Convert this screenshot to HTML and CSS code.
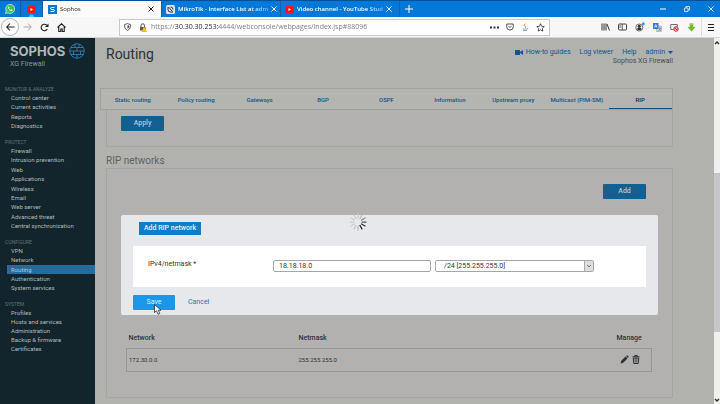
FILE: index.html
```html
<!DOCTYPE html>
<html lang="en">
<head>
<meta charset="utf-8">
<title>Sophos</title>
<link rel="stylesheet" href="styles.css">
</head>
<body>
<header class="browser">
  <div class="tabstrip">
    <button class="pin" aria-label="WhatsApp"><svg width="10" height="10" viewBox="0 0 20 20"><path d="M1 19l1.400-5A9 9 0 1 1 6 17.700z" fill="#2fc653" stroke="#dff5e3" stroke-width="1.500"/><path d="M6.500 5.500c-2 2.500 3.500 9.500 7 8.500 2-.8 1.600-2 1-2.300l-2-1-1.500 1.200C9.500 11.300 8.500 10 8.200 9l1-1.300-1-2.200z" fill="#fff"/></svg></button>
    <button class="pin pin-dot" aria-label="YouTube"><svg width="9" height="7" viewBox="0 0 18 14"><rect width="18" height="14" rx="4" fill="#f5141c"/><path d="M7 4l5 3-5 3z" fill="#fff"/></svg></button>
    <div class="tab tab-active"><svg width="9" height="9" viewBox="0 0 18 18"><rect width="18" height="18" fill="#0b77c9"/><path d="M13 5H8q-3 0-3 2t3 2h2q3 0 3 2t-3 2H5" fill="none" stroke="#fff" stroke-width="2"/></svg><span>Sophos</span><button aria-label="Close tab"><svg width="6" height="6" viewBox="0 0 6 6"><path d="M.5.5l5 5m0-5l-5 5" stroke="currentColor"/></svg></button></div>
    <div class="tab"><svg width="9" height="9" viewBox="0 0 18 18"><rect width="18" height="18" rx="3" fill="#dfe3e6"/><path d="M4 4v5q0 5 5 5h5M5 4l8 9M9 4q5 0 5 5" fill="none" stroke="#333" stroke-width="2"/></svg><span>MikroTik - Interface List at adm</span><button aria-label="Close tab"><svg width="6" height="6" viewBox="0 0 6 6"><path d="M.5.5l5 5m0-5l-5 5" stroke="currentColor"/></svg></button></div>
    <div class="tab"><svg width="9" height="7" viewBox="0 0 18 14"><rect width="18" height="14" rx="4" fill="#f5141c"/><path d="M7 4l5 3-5 3z" fill="#fff"/></svg><span>Video channel - YouTube Stud</span><button aria-label="Close tab"><svg width="6" height="6" viewBox="0 0 6 6"><path d="M.5.5l5 5m0-5l-5 5" stroke="currentColor"/></svg></button></div>
    <button class="newtab" aria-label="New tab"><svg width="8" height="8" viewBox="0 0 8 8"><path d="M4 0v8M0 4h8" stroke="#fff"/></svg></button>
    <div class="window-controls">
      <button aria-label="Minimize"><svg width="6" height="6" viewBox="0 0 6 6"><path d="M0 3h6" stroke="#fff"/></svg></button>
      <button aria-label="Restore"><svg width="6" height="6" viewBox="0 0 12 12"><path d="M1 4h7v7H1zM4 4V1h7v7H8" fill="none" stroke="#fff" stroke-width="1.500"/></svg></button>
      <button aria-label="Close"><svg width="6" height="6" viewBox="0 0 6 6"><path d="M.3.3l5.400 5.400m0-5.400L.3 5.700" stroke="#fff" stroke-width=".8"/></svg></button>
    </div>
  </div>
  <div class="toolbar">
    <button class="back" aria-label="Back"><svg width="9" height="8" viewBox="0 0 18 16"><path d="M17 8H2m6-7L1.500 8 8 15" fill="none" stroke="#222" stroke-width="2.200"/></svg></button>
    <button class="nav" aria-label="Forward"><svg width="9" height="8" viewBox="0 0 18 16"><path d="M1 8h15m-6-7l6.500 7-6.500 7" fill="none" stroke="#aaa" stroke-width="2"/></svg></button>
    <button class="nav" aria-label="Reload"><svg width="9" height="9" viewBox="0 0 18 18"><path d="M14.500 12A6.500 6.500 0 1 1 13.500 4.500" fill="none" stroke="#222" stroke-width="2.200"/><path d="M17 1v7h-7z" fill="#222"/></svg></button>
    <button class="nav" aria-label="Home"><svg width="9" height="9" viewBox="0 0 18 18"><path d="M1 9l8-7.500L17 9M3.500 8v9h4v-5h3v5h4V8" fill="none" stroke="#222" stroke-width="2.200"/></svg></button>
    <div class="urlbar">
      <svg width="7" height="8" viewBox="0 0 14 16"><path d="M1.500 2.500Q5 2.500 7 1q2 1.500 5.500 1.500V8q0 4-5.500 7-5.500-3-5.500-7z" fill="none" stroke="#444" stroke-width="1.800"/><path d="M7 4.500v7Q10 10 10 7.500V5z" fill="#444"/></svg>
      <svg class="lock" width="8" height="9" viewBox="0 0 16 18"><path d="M4 8V5a3.500 3.500 0 0 1 7 0v3" fill="none" stroke="#555" stroke-width="2"/><path d="M2 8h11v7H2z" fill="#555"/><path d="M10 7l6 11H4.500z" fill="#f9bd12"/></svg>
      <input class="url" type="text" aria-label="Address" value="https://30.30.30.253:4444/webconsole/webpages/index.jsp#88096">
      <svg width="9" height="3" viewBox="0 0 9 3"><path d="M0 1.500h2m1.500 0h2m1.500 0h2" stroke="#333" stroke-width="1.800"/></svg>
      <svg width="8" height="8" viewBox="0 0 16 16"><path d="M1.500 2h13v6a6.500 6 0 0 1-13 0zM5 6l3 3 3-3" fill="none" stroke="#444" stroke-width="1.800"/></svg>
      <svg width="8" height="9" viewBox="0 0 16 18"><path d="M9 1q-5 4-1 6t0 3" fill="none" stroke="#e99145" stroke-width="2"/><path d="M4 12h8M4 15h8M12 11q3-2 1 2" fill="none" stroke="#7ea3bd" stroke-width="1.800"/></svg>
      <svg width="9" height="9" viewBox="0 0 18 18"><path d="M9 1.500l2.300 5 5.200.6-3.800 3.700 1 5.400L9 13.600l-4.700 2.600 1-5.400L1.500 7.100l5.200-.6z" fill="none" stroke="#333" stroke-width="1.700"/></svg>
    </div>
    <div class="tools">
      <button aria-label="Library"><svg width="9" height="8" viewBox="0 0 18 16"><path d="M2 1v14M6 1v14M10 1v14M12 2l5 13" stroke="#333" stroke-width="2"/></svg></button>
      <button aria-label="Sidebars"><svg width="9" height="8" viewBox="0 0 18 16"><rect x="1" y="2" width="16" height="12" rx="2" fill="none" stroke="#333" stroke-width="1.800"/><path d="M8.500 2v12M3 5.500h3M3 8.500h3" stroke="#333" stroke-width="1.600"/></svg></button>
      <button aria-label="Account"><svg width="10" height="10" viewBox="0 0 20 20"><circle cx="8.500" cy="11" r="7" fill="#eee" stroke="#444" stroke-width="1.500"/><circle cx="8.500" cy="8.500" r="3" fill="#333"/><path d="M4 15q0-4 4.500-4t4.500 4q-4.500 3-9 0z" fill="#333"/><circle cx="16.500" cy="3.500" r="3" fill="#15a3f2"/></svg></button>
      <button aria-label="Translate"><svg width="9" height="9" viewBox="0 0 18 18"><rect x="7" y="6" width="10" height="11" fill="#d5d9df" stroke="#8792a2"/><rect width="11" height="12" fill="#3c78d8"/><path d="M3 9l2.500-6L8 9M4 7h3" fill="none" stroke="#fff" stroke-width="1.300"/><path d="M11 10h5m-1 0q-1 4-4 5m1-3q1 3 4 3" fill="none" stroke="#566" stroke-width="1.200"/></svg></button>
      <button aria-label="Blocked"><svg width="9" height="9" viewBox="0 0 18 18"><path d="M7 13H1.500V3h13v5" fill="none" stroke="#555" stroke-width="1.700"/><circle cx="12" cy="12" r="4.500" fill="#f4c2c2" stroke="#d32232" stroke-width="2"/><path d="M9 9l6 6" stroke="#d32232" stroke-width="2"/></svg></button>
      <button aria-label="Download"><svg width="9" height="9" viewBox="0 0 18 18"><path d="M5.500 1h7v7H17l-8 9-8-9h4.500z" fill="#6dbb1d"/><path d="M5.500 1h7v3h-7z" fill="#98d44e"/></svg></button>
    </div>
    <button class="menu" aria-label="Menu"><svg width="8" height="7" viewBox="0 0 8 7"><path d="M1 .5h6M1 3.500h6M1 6.500h6" stroke="#222"/></svg></button>
  </div>
</header>
<div class="app">
  <aside class="sidebar">
    <div class="brand">
      <div class="brand-name"><strong>SOPHOS</strong><svg width="16" height="16" viewBox="0 0 32 32"><g fill="none" stroke="#2b78a5" stroke-width="2"><circle cx="16" cy="16" r="14.500"/><path d="M4 9h24M2 16h28M4 23h24M16 9v7M9 16v7M23 16v7M12 2v7M20 2v7M16 23v7"/></g></svg></div>
      <div class="brand-sub">XG Firewall</div>
    </div>
    <nav class="menu-groups">
      <section><h2>MONITOR &amp; ANALYZE</h2><ul><li><a href="#">Control center</a></li><li><a href="#">Current activities</a></li><li><a href="#">Reports</a></li><li><a href="#">Diagnostics</a></li></ul></section>
      <section><h2>PROTECT</h2><ul><li><a href="#">Firewall</a></li><li><a href="#">Intrusion prevention</a></li><li><a href="#">Web</a></li><li><a href="#">Applications</a></li><li><a href="#">Wireless</a></li><li><a href="#">Email</a></li><li><a href="#">Web server</a></li><li><a href="#">Advanced threat</a></li><li><a href="#">Central synchronization</a></li></ul></section>
      <section><h2>CONFIGURE</h2><ul><li><a href="#">VPN</a></li><li><a href="#">Network</a></li><li><a class="current" href="#">Routing</a></li><li><a href="#">Authentication</a></li><li><a href="#">System services</a></li></ul></section>
      <section><h2>SYSTEM</h2><ul><li><a href="#">Profiles</a></li><li><a href="#">Hosts and services</a></li><li><a href="#">Administration</a></li><li><a href="#">Backup &amp; firmware</a></li><li><a href="#">Certificates</a></li></ul></section>
    </nav>
  </aside>
  <main class="main">
    <div class="page-head">
      <h1>Routing</h1>
      <div class="account">
        <div class="links"><a href="#"><svg width="8" height="5" viewBox="0 0 8 5"><path d="M0 0h5v5H0zM5 2l3-2v5L5 3z" fill="currentColor"/></svg>How-to guides</a><a href="#">Log viewer</a><a href="#">Help</a><a href="#">admin<svg width="5" height="3" viewBox="0 0 5 3"><path d="M0 0h5L2.500 3z" fill="currentColor"/></svg></a></div>
        <div class="product">Sophos XG Firewall</div>
      </div>
    </div>
    <nav class="subtabs"><a href="#">Static routing</a><a href="#">Policy routing</a><a href="#">Gateways</a><a href="#">BGP</a><a href="#">OSPF</a><a href="#">Information</a><a href="#">Upstream proxy</a><a href="#">Multicast (PIM-SM)</a><a class="selected" href="#">RIP</a></nav>
    <div class="panel panel-apply"><button class="btn">Apply</button></div>
    <h2 class="section-title">RIP networks</h2>
    <div class="panel panel-networks">
      <div class="actions"><button class="btn">Add</button></div>
      <table class="networks">
        <thead><tr><th>Network</th><th>Netmask</th><th class="manage">Manage</th></tr></thead>
        <tbody><tr><td>172.30.0.0</td><td>255.255.255.0</td><td class="manage"><button aria-label="Edit"><svg width="9" height="9" viewBox="0 0 18 18"><path d="M1 17l1.500-5.500L11 3l4 4-8.500 8.500zM12 2l1.500-1.200q1-.5 2 .5l1.200 1.200q1 1 .3 2L16 6z" fill="#303336"/></svg></button><button aria-label="Delete"><svg width="8" height="9" viewBox="0 0 16 18"><path d="M1 3.500h14M5.500 3V1h5v2M2.500 6l1 11h9l1-11z" fill="none" stroke="#303336" stroke-width="2"/><path d="M6 7v8M8 7v8M10 7v8" stroke="#303336" stroke-width="1.200"/></svg></button></td></tr></tbody>
      </table>
    </div>
    <form class="dialog">
      <h2 class="dialog-title">Add RIP network</h2>
      <svg class="spinner" width="18" height="18" viewBox="0 0 36 36"><g stroke-width="2.500" stroke-linecap="round"><path d="M18 2v8" stroke="#ccc"/><path d="M26 4l-4 7" stroke="#bbb"/><path d="M32 10l-7 4" stroke="#888"/><path d="M34 18h-8" stroke="#555"/><path d="M32 26l-7-4" stroke="#333"/><path d="M26 32l-4-7" stroke="#222"/><path d="M18 34v-8" stroke="#bbb"/><path d="M10 32l4-7" stroke="#c2c2c2"/><path d="M4 26l7-4" stroke="#ccc"/><path d="M2 18h8" stroke="#ccc"/><path d="M4 10l7 4" stroke="#ccc"/><path d="M10 4l4 7" stroke="#ccc"/></g></svg>
      <div class="fields">
        <label for="ip">IPv4/netmask *</label>
        <input id="ip" type="text" value="18.18.18.0">
        <div class="select"><select aria-label="Netmask"><option>/24 [255.255.255.0]</option></select><svg width="9" height="10" viewBox="0 0 9 10"><path d="M2.500 4l2 2 2-2" fill="none" stroke="#555"/></svg></div>
      </div>
      <div class="dialog-actions"><button class="save" type="button">Save</button><a href="#">Cancel</a>
        <svg class="cursor" width="8" height="11" viewBox="0 0 16 22"><path d="M1 1v16l4-3.500 3 7 3.500-1.500-3-6.500H14z" fill="#fff" stroke="#222" stroke-width="1.500"/></svg></div>
    </form>
  </main>
  <div class="scrollbar"><svg width="6" height="9" viewBox="0 0 6 9"><path d="M1 6l2-2 2 2" fill="none" stroke="#333" stroke-width="1.500"/></svg><span class="thumb"></span><svg width="6" height="9" viewBox="0 0 6 9"><path d="M1 4l2 2 2-2" fill="none" stroke="#333" stroke-width="1.500"/></svg></div>
</div>
</body>
</html>
```
FILE: styles.css
```css
* { box-sizing: border-box; }
body { margin: 0; height: 100vh; display: flex; flex-direction: column; overflow: hidden; font: 7px/9px Roboto, "Open Sans", sans-serif; color: #303336; }
button { border: 0; padding: 0; background: none; font: inherit; color: inherit; display: flex; align-items: center; justify-content: center; }
a { color: #17548a; text-decoration: none; }
h1, h2, ul { margin: 0; padding: 0; list-style: none; font-weight: 400; }
svg { flex: none; display: block; }

.browser { font-family: "Open Sans", sans-serif; }
.tabstrip { display: flex; height: 17px; background: #0278d9; border-top: 1px solid #075296; color: #fff; }
.pin { width: 21px; border-right: 1px solid #0b5fa6; }
.pin-dot { width: 22px; background: radial-gradient(circle at 50% 100%, #2fd0ff 2px, transparent 3px); }
.tab { width: 119px; display: flex; align-items: center; gap: 3px; padding: 0 7px 0 4px; border-right: 1px solid #1263a9; font-size: 6px; font-weight: 600; }
.tab span { flex: 1; white-space: nowrap; mask-image: linear-gradient(to right, #000 80%, rgb(0 0 0 / 40%)); }
.tab-active { background: #fbfbfc; color: #222; padding-left: 5px; font-weight: 400; }
.newtab { width: 18px; }
.window-controls { display: flex; gap: 18px; margin-left: auto; padding-right: 6px; }
.toolbar { display: flex; align-items: center; height: 21px; background: #f7f7f8; border-bottom: 1px solid #d5d5d5; }
.back { width: 18px; height: 18px; margin-left: 1px; border: 1px solid #b5b5b8; border-radius: 50%; background: #fff; }
.nav { width: 17px; height: 17px; }
.urlbar { flex: 1; display: flex; align-items: center; gap: 7px; height: 17px; margin-left: 49px; padding: 0 4px; border: 1px solid #c9c9cc; background: #fff; }
.lock { margin-left: 1px; }
.url { flex: 1; min-width: 0; margin-left: -3px; padding: 0; border: 0; font: 7px/12px "Open Sans", sans-serif; color: transparent; background: linear-gradient(to right, #777 24px, #222 24px, #222 68px, #777 68px); background-clip: text; }
.tools { display: flex; gap: 8px; margin-left: 51px; margin-right: 5px; }
.menu { width: 19px; height: 18px; border-left: 1px solid #ddd; }

.app { flex: 1; display: flex; min-height: 0; }
.sidebar { width: 95px; background: #13252c; color: #b0babc; font-size: 6px; font-weight: 600; }
.brand { padding: 5px 0 0 10px; height: 47px; }
.brand-name { display: flex; align-items: center; gap: 4px; }
.brand-name strong { font: 700 13px/16px Inter, sans-serif; color: #b3b7b8; }
.brand-sub { font-size: 7px; line-height: 10px; color: #8b979b; font-weight: 400; }
.menu-groups { display: grid; grid-template-rows: 53px 100px 62px 56px; }
.menu-groups section { display: flex; flex-direction: column; padding-left: 5px; padding-bottom: 8px; }
.menu-groups h2 { font-size: 5px; line-height: 8px; color: #617075; }
.menu-groups ul { flex: 1; display: flex; flex-direction: column; justify-content: space-between; padding-left: 2px; }
.menu-groups a { display: block; padding-left: 4px; color: inherit; }
.menu-groups .current { background: #266c98; color: #b5cad6; }

.main { position: relative; flex: 1; min-width: 0; padding: 7px 41px 0 5px; background: #b1b2ad; }
.page-head { display: flex; justify-content: space-between; padding-left: 6px; height: 43px; }
h1 { font-size: 14px; line-height: 18px; color: #303233; }
.account { text-align: right; color: #4b4d4d; }
.links { display: flex; gap: 9px; padding-top: 3px; }
.links a { display: flex; align-items: center; gap: 3px; }
.subtabs { display: flex; height: 22px; background: #b4b4b1; border: 1px solid #a0a19e; font-size: 6px; line-height: 21px; font-weight: 500; }
.subtabs a { flex: 1 1 0; min-width: 0; text-align: center; white-space: nowrap; }
.subtabs .selected { color: #292c2e; border-bottom: 1px solid #174d77; }
.panel { margin-left: 6px; border: 1px solid #a5a5a2; background: #b2b1af; }
.panel-apply { height: 37px; padding: 6px 14px; border-top: 0; }
.btn { width: 43px; height: 15px; background: #145f91; color: #b6c7d2; border-radius: 1px; font-weight: 500; }
.section-title { margin: 8px 0 1px 6px; font-size: 10px; line-height: 12px; color: #606262; }
.panel-networks { padding: 15px 20px 25px 19px; }
.actions { display: flex; justify-content: flex-end; padding-right: 6px; }
.networks { width: 100%; margin-top: 131px; border-collapse: collapse; table-layout: fixed; }
.networks th { height: 18px; padding: 0 2px; text-align: left; font-weight: 500; }
.networks td { height: 23px; padding: 0 2px; font-size: 6px; }
.networks th:first-child { width: 170px; }
.networks tbody tr { border: 1px solid #969694; }
.networks .manage { width: 35px; padding: 0; }
.networks .manage button { display: inline-flex; vertical-align: middle; margin-left: 3px; }

.dialog { position: absolute; top: 177px; left: 26px; right: 56px; height: 100px; padding: 7px 12px 5px; background: #e6e8eb; border-radius: 2px; }
.dialog-title { width: 62px; margin-left: 6px; background: #0f7ec5; color: #e6f1f9; font-size: 7px; font-weight: 500; line-height: 13px; text-align: center; white-space: nowrap; }
.spinner { position: absolute; top: -2px; left: calc(50% - 41px); }
.fields { display: grid; grid-template-columns: 121px 158px 159px; column-gap: 4px; height: 41px; margin-top: 11px; padding: 14px 0 0 15px; background: #fff; }
.fields label { line-height: 9px; }
.fields input, .select { height: 12px; border: 1px solid #a4a6a9; border-radius: 2px; background: #fff; }
.fields input { width: 100%; padding: 0 5px; font: inherit; color: #333; }
.select { display: flex; }
.select select { appearance: none; flex: 1; border: 0; padding: 0 8px; background: none; font: inherit; color: #333; }
.select svg { background: #ddd; border-left: 1px solid #aaa; }
.dialog-actions { position: relative; display: flex; align-items: center; gap: 13px; margin-top: 8px; }
.dialog-actions a { color: #2377b0; }
.save { width: 42px; height: 15px; background: #1a96ea; color: #d9efff; border-radius: 1px; }
.cursor { position: absolute; left: 21px; top: 9px; }

.scrollbar { width: 6px; display: flex; flex-direction: column; background: #f0f0f0; }
.thumb { flex: 0 1 159px; margin: 126px 0 auto; background: #c5c6c7; }
```
